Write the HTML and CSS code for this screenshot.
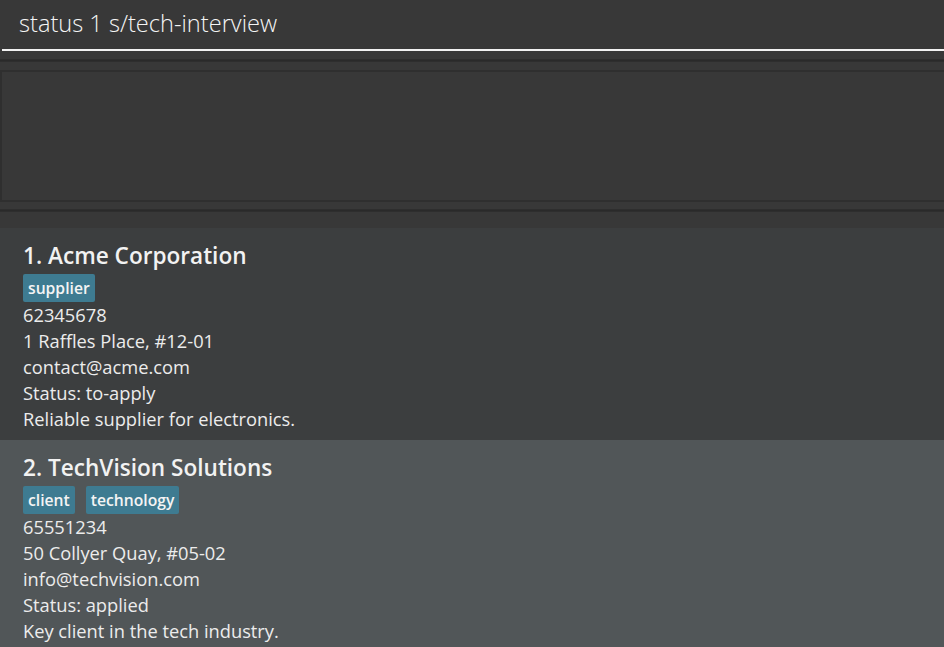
FILE: index.html
```html
<!DOCTYPE html>
<html>
<head>
<meta charset="utf-8">
<link rel="stylesheet" href="styles.css">
</head>
<body>
<div class="app">
  <div class="command">
    <span class="command-text">status 1 s/tech-interview</span>
  </div>
  <div class="gap-a"></div>
  <div class="divider"></div>
  <div class="gap-b"></div>
  <div class="result"></div>
  <div class="gap-c"></div>
  <div class="divider"></div>
  <div class="gap-d"></div>
  <div class="list">
    <div class="card even">
      <div class="name">1. Acme Corporation</div>
      <div class="tags"><span class="tag">supplier</span></div>
      <div class="line">62345678</div>
      <div class="line">1 Raffles Place, #12-01</div>
      <div class="line">contact@acme.com</div>
      <div class="line">Status: to-apply</div>
      <div class="line">Reliable supplier for electronics.</div>
    </div>
    <div class="card odd">
      <div class="name">2. TechVision Solutions</div>
      <div class="tags"><span class="tag">client</span><span class="tag">technology</span></div>
      <div class="line">65551234</div>
      <div class="line">50 Collyer Quay, #05-02</div>
      <div class="line">info@techvision.com</div>
      <div class="line">Status: applied</div>
      <div class="line">Key client in the tech industry.</div>
    </div>
  </div>
</div>
</body>
</html>
```

FILE: styles.css
```css
html, body {
  margin: 0;
  padding: 0;
  background: #383838;
  height: 100%;
  overflow: hidden;
}

.app {
  display: flex;
  flex-direction: column;
  width: 944px;
  height: 647px;
  font-family: "Open Sans", "Noto Sans", sans-serif;
  color: #eeeeee;
}

.app > * {
  flex-shrink: 0;
}

.command {
  display: flex;
  align-items: center;
  margin-left: 2px;
  padding-left: 17px;
  padding-bottom: 4px;
  box-sizing: border-box;
  height: 51px;
  border-bottom: 2px solid #f2f2f2;
  background: #383838;
}

.command-text {
  font-size: 23.6px;
  font-weight: 300;
  color: #f5f5f5;
}

.gap-a { height: 8px; }
.gap-b { height: 8px; }
.gap-c { height: 7px; }
.gap-d { height: 16px; }

.divider {
  height: 3px;
  background: linear-gradient(#303030, #2a2a2a, #303030);
}

.result {
  height: 132px;
  box-sizing: border-box;
  border: 2px solid #2f2f2f;
  border-right: none;
  background: #383838;
}

.app > .list {
  flex: 1 1 auto;
  min-height: 0;
  overflow: hidden;
  display: flex;
  flex-direction: column;
}

.card {
  padding: 10px 23px 8px;
  display: flex;
  flex-direction: column;
  flex-shrink: 0;
  box-sizing: border-box;
}

.card.even {
  background: #3c3e3f;
  height: 212px;
}

.card.odd {
  background: #515658;
  flex: 1 0 auto;
}

.name {
  font-size: 22.6px;
  font-weight: 600;
  color: #f2f2f2;
  line-height: 36px;
}

.tags {
  display: flex;
  gap: 11px;
  margin-top: 0;
  margin-bottom: 0;
}

.tag {
  background: #3e7b91;
  color: #f4f4f4;
  font-size: 15.7px;
  font-weight: 600;
  line-height: 28px;
  padding: 0 5px;
  border-radius: 2px;
}

.line {
  font-size: 18.3px;
  line-height: 26px;
  color: #ececec;
}
```
